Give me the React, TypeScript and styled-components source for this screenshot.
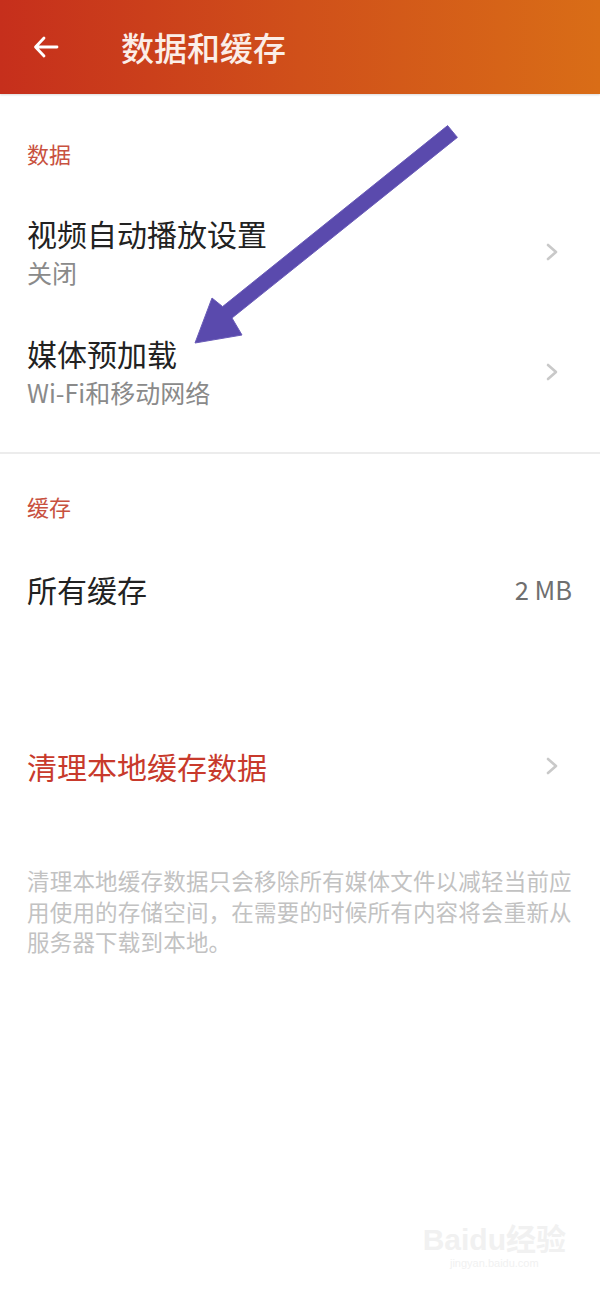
import React from "react";
import styled, { createGlobalStyle } from "styled-components";

const GlobalStyle = createGlobalStyle`
    body {
        margin: 0;
        background: #fff;
        font-family: "Noto Sans CJK SC", "Noto Sans", sans-serif;
    }
`;

const Page = styled.div`
    position: relative;
    width: 600px;
    min-height: 1292px;
    background: #fff;
    overflow: hidden;
`;

const Header = styled.header`
    display: flex;
    align-items: center;
    height: 94px;
    padding-left: 33px;
    background: linear-gradient(90deg, #c62f1c 0%, #d0501a 50%, #d96d17 100%);
    box-shadow: 0 1px 2px rgba(0, 0, 0, 0.15);
    box-sizing: border-box;
`;

const BackButton = styled.div`
    display: flex;
    width: 26px;
    height: 22px;
    margin-right: 62px;
`;

const Title = styled.h1`
    margin: 0;
    color: #fbeee8;
    font-size: 33px;
    font-weight: 500;
    line-height: 40px;
`;

const SectionTitle = styled.div<{ $top: number; $bottom: number }>`
    padding: ${({ $top, $bottom }) => `${$top}px 27px ${$bottom}px`};
    color: #c85140;
    font-size: 22px;
    line-height: 30px;
`;

const Row = styled.div<{ $gapTop?: number }>`
    display: flex;
    align-items: center;
    justify-content: space-between;
    padding: 21px 28px 21px 27px;
    margin-top: ${({ $gapTop }) => $gapTop ?? 0}px;
`;

const RowText = styled.div`
    display: flex;
    flex-direction: column;
`;

const RowTitle = styled.div<{ $danger?: boolean }>`
    color: ${({ $danger }) => ($danger ? "#c83a2c" : "#222")};
    font-size: 30px;
    line-height: 40px;
`;

const RowSub = styled.div`
    color: #8a8a8a;
    font-size: 25px;
    line-height: 38px;
`;

const RowValue = styled.div`
    color: #6f6f6f;
    font-size: 25.5px;
    line-height: 40px;
`;

const Chevron = styled.svg`
    width: 12px;
    height: 18px;
    margin-right: 14px;
`;

const Divider = styled.div`
    height: 2px;
    margin-top: 20px;
    background: #ececec;
`;

const Note = styled.p`
    margin: 58px 0 0;
    padding: 0 27px;
    color: #c2c2c2;
    font-size: 22.5px;
    letter-spacing: 0.2px;
    line-height: 30.5px;
`;

const Pointer = styled.svg`
    position: absolute;
    left: 0;
    top: 0;
    pointer-events: none;
`;

const Watermark = styled.div`
    position: absolute;
    right: 34px;
    bottom: 22px;
    display: flex;
    flex-direction: column;
    align-items: center;
    color: #f1f1f1;
    font-family: "Liberation Sans", "Noto Sans CJK SC", sans-serif;
`;

const WatermarkBrand = styled.div`
    font-size: 30px;
    font-weight: 700;
    line-height: 32px;
`;

const WatermarkUrl = styled.div`
    font-size: 11px;
    line-height: 14px;
`;

const ChevronIcon = () => (
    <Chevron viewBox="0 0 12 18">
        <polyline
            points="2,2 10,9 2,16"
            fill="none"
            stroke="#c9c9c9"
            strokeWidth="2.6"
            strokeLinecap="round"
            strokeLinejoin="round"
        />
    </Chevron>
);

type Setting = {
    title: string;
    sub?: string;
};

const dataSettings: Setting[] = [
    { title: "视频自动播放设置", sub: "关闭" },
    { title: "媒体预加载", sub: "Wi-Fi和移动网络" },
];

const App: React.FC = () => {
    return (
        <Page>
            <GlobalStyle />
            <Header>
                <BackButton>
                    <svg width="26" height="22" viewBox="0 0 26 22">
                        <path
                            d="M24 11H3M11 2L2.5 11L11 20"
                            fill="none"
                            stroke="#fff"
                            strokeWidth="2.8"
                            strokeLinecap="round"
                            strokeLinejoin="round"
                        />
                    </svg>
                </BackButton>
                <Title>数据和缓存</Title>
            </Header>

            <SectionTitle $top={44} $bottom={24}>
                数据
            </SectionTitle>
            {dataSettings.map((s) => (
                <Row key={s.title}>
                    <RowText>
                        <RowTitle>{s.title}</RowTitle>
                        <RowSub>{s.sub}</RowSub>
                    </RowText>
                    <ChevronIcon />
                </Row>
            ))}
            <Divider />

            <SectionTitle $top={37} $bottom={27}>
                缓存
            </SectionTitle>
            <Row>
                <RowTitle>所有缓存</RowTitle>
                <RowValue>2 MB</RowValue>
            </Row>
            <Row $gapTop={95}>
                <RowTitle $danger>清理本地缓存数据</RowTitle>
                <ChevronIcon />
            </Row>

            <Note>
                清理本地缓存数据只会移除所有媒体文件以减轻当前应用使用的存储空间，在需要的时候所有内容将会重新从服务器下载到本地。
            </Note>

            {/* annotation arrow drawn over the list */}
            <Pointer width="600" height="400" viewBox="0 0 600 400">
                <polygon
                    points="447.6,125.6 457.4,137.4 232,318 242,335 195,343 212,298 222.6,306.6"
                    fill="#5a4aad"
                    stroke="#6a5cb8"
                    strokeWidth="1"
                    strokeLinejoin="round"
                />
            </Pointer>

            <Watermark>
                <WatermarkBrand>Baidu经验</WatermarkBrand>
                <WatermarkUrl>jingyan.baidu.com</WatermarkUrl>
            </Watermark>
        </Page>
    );
};

export default App;
